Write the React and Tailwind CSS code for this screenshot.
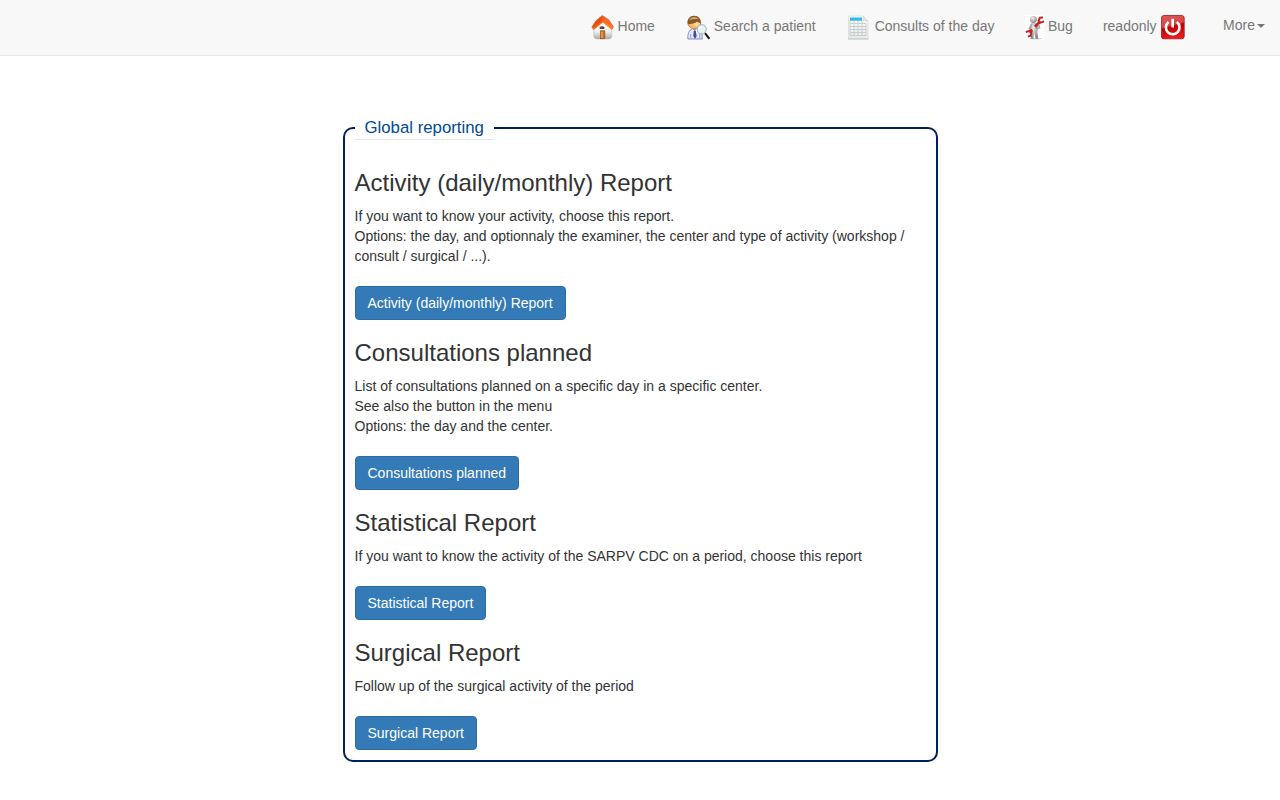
import React from "react";

function HomeIcon() {
  return (
    <svg width="25" height="25" viewBox="0 0 25 25" className="shrink-0">
      <defs>
        <linearGradient id="roof" x1="0" y1="0" x2="1" y2="1">
          <stop offset="0" stopColor="#d74208" />
          <stop offset="0.5" stopColor="#ff6a1e" />
          <stop offset="1" stopColor="#ff7a30" />
        </linearGradient>
        <linearGradient id="wall" x1="0" y1="0" x2="0" y2="1">
          <stop offset="0" stopColor="#ffffff" />
          <stop offset="0.6" stopColor="#eeeeec" />
          <stop offset="1" stopColor="#a9a9a7" />
        </linearGradient>
      </defs>
      <path d="M4.8 13 L13.5 6 L22.8 13 V21.5 Q22.8 23.5 20 24 H8 Q4.8 23.5 4.8 21.5Z" fill="url(#wall)" stroke="#b5b5b5" strokeWidth="0.5" />
      <path d="M2.8 12 L7.2 5.5 L13.3 0.5 L20 5 L24.5 12 L22.8 14.5 L13.8 7.2 L4.6 14.5Z" fill="url(#roof)" stroke="#bd4a18" strokeWidth="0.5" />
      <path d="M3.5 12 L7.5 6 L13 1.5 L12.5 6.5 L4.7 13Z" fill="#e64f0e" />
      <path d="M14 7.2 L22.8 14.2" stroke="#ffad79" strokeWidth="0.7" />
      <path d="M10.5 12.2 Q13 10.5 15.7 12.2 L15 14 H11Z" fill="#604331" />
      <rect x="11.3" y="15.8" width="4.6" height="8" fill="#c86b20" stroke="#875126" strokeWidth="0.6" />
      <rect x="12.2" y="16.8" width="1.6" height="6" fill="#f0a04a" />
    </svg>
  );
}

function PatientIcon() {
  return (
    <svg width="25" height="25" viewBox="-0.7 0 25 25" className="shrink-0">
      <path d="M2.2 24 Q1.6 16 6 14.3 H12 Q17 16 16.5 24Z" fill="#e3e8ff" stroke="#6875b6" strokeWidth="0.8" />
      <path d="M5 23.5 V19 M14 23.5 V19" stroke="#a1ace2" strokeWidth="1.2" />
      <path d="M6 13.5 L8.5 16 L12 13.5 L11 20 H8Z" fill="#fff" />
      <path d="M8 15.5 H10 L11 21 L9.3 24 L7.6 21Z" fill="#4149a0" />
      <ellipse cx="8.6" cy="7.6" rx="6.4" ry="6.2" fill="#ffb763" stroke="#a86a29" strokeWidth="0.7" />
      <path d="M7 9 Q9 12.5 13 11 L14.3 8 L12 7Z" fill="#ffd8a0" />
      <path d="M2 9.2 Q1 0.8 8.6 0.7 Q15 1 15.2 8.2 Q13 8.2 11.7 6.5 Q8 9.2 2 9.2Z" fill="#8a592a" />
      <path d="M3.2 5 Q7 -0.5 13.2 4 Q8 3.5 3.2 5Z" fill="#c9a980" />
      <path d="M19.3 18.2 L23.7 23.8" stroke="#111" strokeWidth="2" />
      <circle cx="16" cy="14.3" r="4.6" fill="#e8f3f6" stroke="#a5adb2" strokeWidth="1" />
      <path d="M13.3 14 Q14 11.5 16.7 12" stroke="#fff" strokeWidth="1.4" fill="none" />
    </svg>
  );
}

function SheetIcon() {
  return (
    <svg width="25" height="25" viewBox="0 0 25 25" className="shrink-0">
      <defs>
        <linearGradient id="paper" x1="0" y1="0" x2="0" y2="1">
          <stop offset="0" stopColor="#ffffff" />
          <stop offset="1" stopColor="#e8e8e8" />
        </linearGradient>
      </defs>
      <path d="M2.5 1 H17 L22 6 V23.7 H2.5Z" fill="url(#paper)" stroke="#d8d8d8" strokeWidth="0.7" />
      <path d="M2 24 H22.3" stroke="#b8b8b8" strokeWidth="0.8" />
      <rect x="4" y="2.5" width="12" height="3.2" fill="#2eb9f2" />
      <path d="M4 5.5 V20.5 M8 5.5 V20.5 M12 5.5 V20.5 M16 5.5 V20.5 M20 8.5 V20.5 M4 8.5 H20 M4 11.5 H20 M4 14.5 H20 M4 17.5 H20 M4 20.5 H20" stroke="#bfc6c9" strokeWidth="0.8" />
      <path d="M17 1 V6 H22Z" fill="#e5e5e5" stroke="#ccc" strokeWidth="0.5" />
    </svg>
  );
}

function WrenchIcon() {
  return (
    <svg width="19.6" height="25" viewBox="0 0 19.6 25" className="shrink-0">
      <defs>
        <radialGradient id="figure" cx="0.4" cy="0.3" r="0.7">
          <stop offset="0" stopColor="#f0f0f0" />
          <stop offset="1" stopColor="#858585" />
        </radialGradient>
      </defs>
      <rect width="20" height="25" fill="#fff" />
      <ellipse cx="11" cy="23.7" rx="6" ry="0.9" fill="#d0d0d0" />
      <path d="M6 8.5 Q9 7 12 9 L13 13 L12.3 17 L13.2 23.8 H10.7 L9.2 18 L8.2 24 H5.7 L6.5 16 L5.5 13Z" fill="url(#figure)" />
      <path d="M6.5 9.5 L4.5 13.5 L7 15.5" stroke="#a5a5a5" strokeWidth="1.8" fill="none" />
      <circle cx="8.4" cy="4.6" r="3.5" fill="url(#figure)" />
      <path d="M4.8 16.8 L7.2 15 M10 11.7 L15 6.8" stroke="#cc2020" strokeWidth="3" />
      <path d="M18 2.5 L14.8 2.8 L13.6 5.8 L15.5 7.7 L19 6.5 M0.8 17 L4 16 L6.4 18 L5.7 20.7 L2.8 21.6" stroke="#cc2020" strokeWidth="2" fill="none" />
      <path d="M10.5 14 L14.5 13 L13.7 9.5" stroke="#aaa" strokeWidth="1.6" fill="none" />
    </svg>
  );
}

function PowerIcon() {
  return (
    <svg width="25" height="25" viewBox="0.8 0 25 25" className="shrink-0">
      <defs>
        <linearGradient id="power" x1="0" y1="0" x2="0.25" y2="1">
          <stop offset="0" stopColor="#d65a5a" />
          <stop offset="0.48" stopColor="#dc4545" />
          <stop offset="0.56" stopColor="#c00000" />
          <stop offset="1" stopColor="#e81818" />
        </linearGradient>
      </defs>
      <rect x="1.2" y="0.5" width="22.8" height="23.3" rx="2.5" fill="url(#power)" stroke="#a51818" strokeWidth="0.8" />
      <path d="M8.4 7 A6.8 6.8 0 1 0 16.6 7" fill="none" stroke="#fff" strokeWidth="2.6" />
      <path d="M12.5 3.8 V12.5" stroke="#fff" strokeWidth="2.6" />
    </svg>
  );
}

const reports = [
  {
    title: "Activity (daily/monthly) Report",
    lines: [
      "If you want to know your activity, choose this report.",
      "Options: the day, and optionnaly the examiner, the center and type of activity (workshop / consult / surgical / ...).",
    ],
  },
  {
    title: "Consultations planned",
    lines: [
      "List of consultations planned on a specific day in a specific center.",
      "See also the button in the menu",
      "Options: the day and the center.",
    ],
  },
  {
    title: "Statistical Report",
    lines: ["If you want to know the activity of the SARPV CDC on a period, choose this report"],
  },
  {
    title: "Surgical Report",
    lines: ["Follow up of the surgical activity of the period"],
  },
];

function NavItem({ icon, children }) {
  return (
    <a href="#" className="flex h-[25px] items-start gap-[3.9px] whitespace-nowrap px-[15px]">
      {icon}
      <span className="pt-px leading-5">{children}</span>
    </a>
  );
}

export default function App() {
  return (
    <div className="min-h-screen bg-white font-['Liberation_Sans',Arial,sans-serif] text-[14px] leading-5 text-[#333]">
      <nav className="flex h-14 justify-end border-b border-[#e7e7e7] bg-[#f8f8f8] pt-[15px] text-[#777]">
        <NavItem icon={<HomeIcon />}>Home</NavItem>
        <NavItem icon={<PatientIcon />}>Search a patient</NavItem>
        <NavItem icon={<SheetIcon />}>Consults of the day</NavItem>
        <NavItem icon={<WrenchIcon />}>Bug</NavItem>
        <a href="#" className="mr-[22.6px] flex h-[25px] items-start gap-[3.9px] pl-[15px]">
          <span className="pt-px">readonly</span>
          <PowerIcon />
        </a>
        <a href="#" className="flex h-5 items-start gap-[2px] px-[15px]">
          <span>More</span>
          <span className="mt-[9px] border-x-4 border-t-4 border-x-transparent border-t-[#777]" />
        </a>
      </nav>
      <main className="flex justify-center pt-[60px]">
        <fieldset className="w-[595px] rounded-[10px] border-2 border-[#001f5f] px-[10px] pb-[10px] pt-[30px]">
          <legend className="h-6 border-b border-[#e5e5e5] px-[10px] text-[16.8px] leading-[23px] text-[#004a94]">
            Global reporting
          </legend>
          <div className="flex flex-col gap-5">
            {reports.map((report) => (
              <section key={report.title}>
                <h3 className="mb-[10px] h-[26px] text-[24px] leading-[26px]">{report.title}</h3>
                {report.lines.map((line) => (
                  <p key={line}>{line}</p>
                ))}
                <button className="mt-5 block h-[34px] rounded-[4px] border border-[#2e6da4] bg-[#337ab7] px-3 text-white">
                  {report.title}
                </button>
              </section>
            ))}
          </div>
        </fieldset>
      </main>
    </div>
  );
}
